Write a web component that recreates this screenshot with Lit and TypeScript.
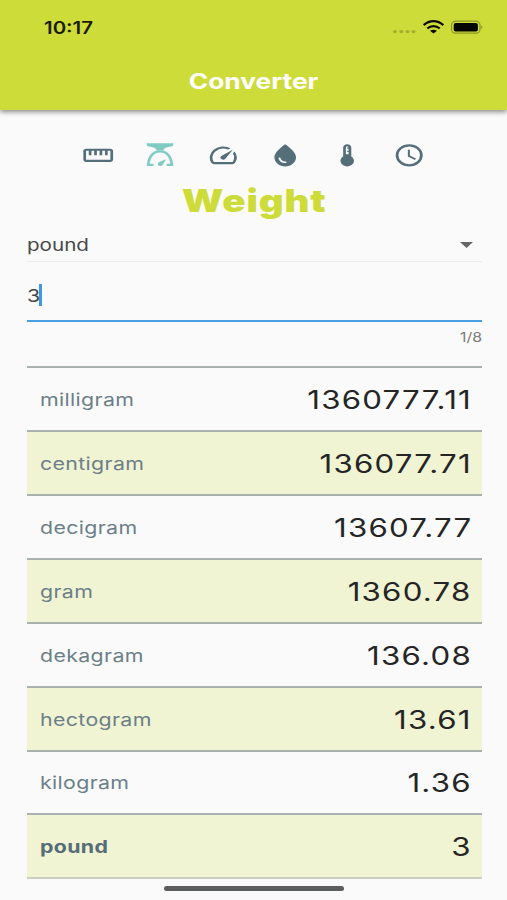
import { LitElement, html, css, svg } from "lit";
import { customElement, property, state } from "lit/decorators.js";
import { classMap } from "lit/directives/class-map.js";

interface Category {
  id: string;
  icon: unknown;
}

const CATEGORIES: Category[] = [
  {
    id: "Length",
    icon: svg`<path d="M21 6H3c-1.1 0-2 .9-2 2v8c0 1.1.9 2 2 2h18c1.1 0 2-.9 2-2V8c0-1.1-.9-2-2-2zm0 10H3V8h2v4h2V8h2v4h2V8h2v4h2V8h2v4h2V8h2v8z"/>`,
  },
  {
    id: "Weight",
    icon: svg`<g transform="translate(-.4 0)"><path d="M2.500 1.200h19.500v1.600c0 .8-.6 1-1.400 1.200C17.500 4.600 15 5 14.800 7.600H9.700C9.500 5 7 4.600 3.900 4c-.8-.2-1.400-.4-1.400-1.200z"/>
      <path d="M3.600 21.500C3.600 13.500 7 8.500 12.250 8.500S20.900 13.500 20.900 21.500M2.500 20.700H7.400M17.100 20.700H22" fill="none" stroke="currentColor" stroke-width="2"/>
      <path d="M16.800 15.600l-2.500 4.900c-.5 1-1.700 1.500-2.700 1-1-.5-1.300-1.700-.6-2.700.3-.4.6-.6 1-.9z"/></g>`,
  },
  {
    id: "Speed",
    icon: svg`<path d="M20.380 8.570l-1.230 1.850a8 8 0 0 1-.22 7.580H5.070A8 8 0 0 1 15.580 6.850l1.850-1.230A10 10 0 0 0 3.350 19a2 2 0 0 0 1.720 1h13.850a2 2 0 0 0 1.740-1 10 10 0 0 0-.27-10.440zm-9.790 6.840a2 2 0 0 0 2.830 0l5.660-8.490-8.490 5.660a2 2 0 0 0 0 2.830z"/>`,
  },
  {
    id: "Volume",
    icon: svg`<path d="M12,2c-5.33,4.55-8,8.48-8,11.8c0,4.98,3.8,8.2,8,8.2s8-3.22,8-8.2C20,10.48,17.33,6.55,12,2z M7.83,14c0.37,0,0.67,0.26,0.74,0.62c0.41,2.22,2.28,2.98,3.64,2.87c0.43-0.02,0.79,0.32,0.79,0.75c0,0.4-0.32,0.73-0.72,0.75c-2.13,0.13-4.62-1.09-5.19-4.12C7.01,14.42,7.37,14,7.83,14z"/>`,
  },
  {
    id: "Temperature",
    icon: svg`<path d="M15 13V5c0-1.660-1.340-3-3-3S9 3.340 9 5v8c-1.210.91-2 2.370-2 4 0 2.760 2.240 5 5 5s5-2.240 5-5c0-1.630-.79-3.090-2-4zm-4-8c0-.55.45-1 1-1s1 .45 1 1h-1v1h1v2h-1v1h1v2h-2V5z"/>`,
  },
  {
    id: "Time",
    icon: svg`<path d="M12 2a10 10 0 1 0 0 20a10 10 0 0 0 0-20zm0 18a8 8 0 1 1 0-16a8 8 0 0 1 0 16zM12.500 7H11v6l5.250 3.150.75-1.230-4.500-2.670z"/>`,
  },
];

const RESULTS = [
  { unit: "milligram", value: "1360777.11" },
  { unit: "centigram", value: "136077.71" },
  { unit: "decigram", value: "13607.77" },
  { unit: "gram", value: "1360.78" },
  { unit: "dekagram", value: "136.08" },
  { unit: "hectogram", value: "13.61" },
  { unit: "kilogram", value: "1.36" },
  { unit: "pound", value: "3" },
];

@customElement("status-bar")
class StatusBar extends LitElement {
  static styles = css`
    :host {
      display: flex;
      align-items: center;
      justify-content: space-between;
      height: 54px;
      padding: 0 24px 0 44px;
      color: #1a1c05;
    }
    .time {
      font-size: 17px;
      font-weight: 600;
      line-height: 52px;
      padding-top: 2px;
      transform: scaleX(1.2);
      transform-origin: left center;
    }
    .icons {
      display: block;
    }
  `;
  render() {
    return html`
      <span class="time">10:17</span>
      <svg class="icons" width="92" height="20" viewBox="0 0 92 20">
        <g fill="#a3af2e">
          <ellipse cx="4" cy="14.600" rx="2" ry="1.600" />
          <ellipse cx="10.300" cy="14.600" rx="2" ry="1.600" />
          <ellipse cx="16.500" cy="14.600" rx="2" ry="1.600" />
          <ellipse cx="22.500" cy="14.600" rx="2" ry="1.600" />
        </g>
        <g fill="none" stroke="#0c0d02" stroke-width="2.300">
          <path d="M32.700 8.100C38.500 2.800 46.500 2.800 52.300 8.100" />
          <path d="M36.300 11.500C39.800 8.300 45.200 8.300 48.700 11.500" />
        </g>
        <path fill="#0c0d02" d="M39 13.800C40.900 12.300 44.100 12.300 46 13.800L42.500 16.600z" />
        <rect x="60.500" y="4.200" width="28.500" height="12" rx="4" fill="none" stroke="#8b9628" stroke-width="1.200" />
        <rect x="62.700" y="6" width="24.200" height="8.500" rx="2" fill="#050500" />
        <path d="M90.200 8.400c1.600.6 1.600 3 0 3.600z" fill="#8b9628" />
      </svg>
    `;
  }
}

@customElement("result-row")
class ResultRow extends LitElement {
  @property() unit = "";
  @property() value = "";
  @property({ type: Boolean }) current = false;

  static styles = css`
    :host {
      display: flex;
      align-items: center;
      justify-content: space-between;
      padding: 1px 10.500px 0 12.500px;
    }
    .unit {
      font-size: 17.500px;
      letter-spacing: 0.280px;
      color: #6c7f88;
      transform: scaleX(1.22);
      transform-origin: left center;
    }
    .current {
      font-weight: 700;
      color: #566d78;
    }
    .value {
      font-size: 25.600px;
      letter-spacing: 1px;
      margin-right: -0.500px;
      color: #252525;
      transform: scaleX(1.22);
      transform-origin: right center;
    }
  `;
  render() {
    return html`
      <span class=${classMap({ unit: true, current: this.current })}>${this.unit}</span>
      <span class="value">${this.value}</span>
    `;
  }
}

@customElement("app-root")
class AppRoot extends LitElement {
  @state() private category = "Weight";
  @state() private unit = "pound";
  @state() private amount = "3";

  static styles = css`
    :host {
      display: flex;
      flex-direction: column;
      position: relative;
      width: 507px;
      height: 900px;
      overflow: hidden;
      background: #fafafa;
      font-family: Inter, "Liberation Sans", sans-serif;
    }
    header {
      flex: none;
      height: 110px;
      background: #cddc39;
      box-shadow: 0 2px 5px rgba(0, 0, 0, 0.45);
    }
    .bar-title {
      margin: 0;
      text-align: center;
      font-size: 21.500px;
      line-height: 54px;
      font-weight: 700;
      color: #fff;
      transform: scaleX(1.225);
    }
    .tabs {
      display: flex;
      justify-content: center;
      gap: 29.800px;
      margin-top: 32.400px;
      padding-left: 0.800px;
      height: 26.600px;
    }
    .tab {
      width: 32.450px;
      height: 26.600px;
      fill: currentColor;
      color: #546e7a;
    }
    .tab.active {
      color: #80cbc4;
    }
    .heading {
      margin: 10px 0 0;
      padding-left: 1px;
      height: 43px;
      line-height: 43px;
      text-align: center;
      font-size: 31.500px;
      letter-spacing: 0.700px;
      font-weight: 900;
      color: #cddc39;
      transform: scaleX(1.22);
    }
    .form {
      margin: 0 25px 0 27px;
    }
    .wide {
      display: inline-block;
      transform: scaleX(1.22);
      transform-origin: left center;
    }
    .select {
      display: flex;
      align-items: center;
      justify-content: space-between;
      box-sizing: border-box;
      height: 40px;
      padding-right: 9px;
      padding-top: 7px;
      border-bottom: 1px solid #ececec;
      font-size: 16.900px;
      color: #484848;
    }
    .field {
      display: flex;
      align-items: center;
      box-sizing: border-box;
      height: 60px;
      padding-top: 9px;
      border-bottom: 2px solid #4a9fe3;
      font-size: 17.500px;
      color: #484848;
    }
    .field .wide {
      margin-left: -0.500px;
    }
    .caret {
      width: 2.500px;
      height: 22px;
      margin-left: 2px;
      background: #3f97e6;
    }
    .counter {
      display: flex;
      justify-content: flex-end;
      height: 44.400px;
      line-height: 31px;
      font-size: 13px;
      color: #7c7c7c;
    }
    .counter .wide {
      transform-origin: right center;
    }
    .results {
      display: grid;
      grid-template-rows: repeat(8, 63.870px);
    }
    .row {
      box-sizing: border-box;
      border-top: 2px solid #a9b0b0;
    }
    .row.tinted {
      background: #f0f4d3;
    }
    .end {
      height: 2px;
      background: #cbcec2;
    }
    .home {
      position: absolute;
      left: 164px;
      top: 886px;
      width: 180px;
      height: 5px;
      border-radius: 3px;
      background: #5c5e5e;
    }
  `;

  render() {
    return html`
      <header>
        <status-bar></status-bar>
        <h1 class="bar-title">Converter</h1>
      </header>
      <nav class="tabs">
        ${CATEGORIES.map(
          (c) => html`<svg
            class=${classMap({ tab: true, active: c.id === this.category })}
            viewBox="0 0 24 24"
            preserveAspectRatio="none"
            @click=${() => (this.category = c.id)}
          >${c.icon}</svg>`
        )}
      </nav>
      <h2 class="heading">${this.category}</h2>
      <div class="form">
        <div class="select">
          <span class="wide">${this.unit}</span>
          <svg width="13" height="6" viewBox="0 0 13 6"><path d="M0 0h13L6.500 6z" fill="#666" /></svg>
        </div>
        <div class="field">
          <span class="wide">${this.amount}</span>
          <span class="caret"></span>
        </div>
        <div class="counter"><span class="wide">${this.amount.length}/8</span></div>
        <div class="results">
          ${RESULTS.map(
            (r, i) => html`<result-row
              class=${classMap({ row: true, tinted: i % 2 === 1 })}
              .unit=${r.unit}
              .value=${r.value}
              .current=${r.unit === this.unit}
            ></result-row>`
          )}
        </div>
        <div class="end"></div>
      </div>
      <div class="home"></div>
    `;
  }
}
